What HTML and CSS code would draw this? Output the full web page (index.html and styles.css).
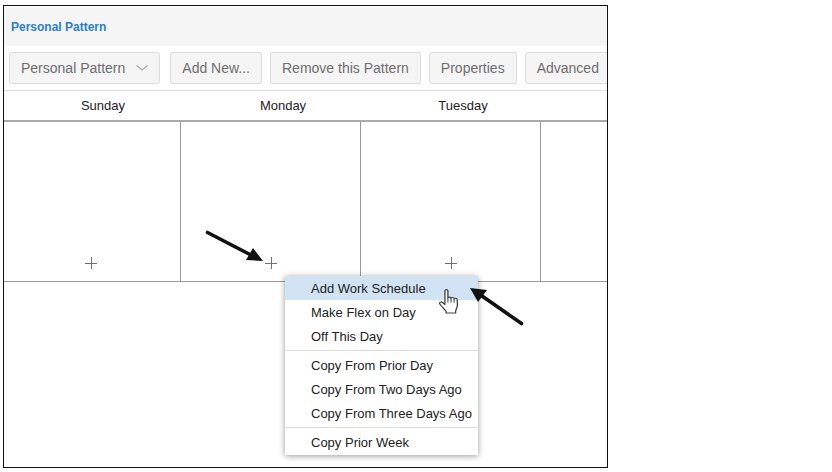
FILE: index.html
```html
<!DOCTYPE html>
<html lang="en">
<head>
  <meta charset="UTF-8">
  <meta name="viewport" content="width=device-width, initial-scale=1.0">
  <title>Personal Pattern</title>
  <link rel="stylesheet" href="styles.css">
</head>
<body>
  <div class="frame">
    <div class="title-bar">Personal Pattern</div>

    <div class="toolbar">
      <button class="btn btn-select" type="button">
        Personal Pattern
        <svg class="chevron" width="12" height="6" viewBox="0 0 12 6"><path d="M0.5 0.5 L6 5 L11.5 0.5" fill="none" stroke="#aaa" stroke-width="1.1"/></svg>
      </button>
      <button class="btn" type="button">Add New...</button>
      <button class="btn" type="button">Remove this Pattern</button>
      <button class="btn" type="button">Properties</button>
      <button class="btn" type="button">Advanced</button>
    </div>

    <div class="day-header">
      <div class="day-name">Sunday</div>
      <div class="day-name">Monday</div>
      <div class="day-name">Tuesday</div>
    </div>

    <div class="week">
      <div class="day"><span class="plus"></span></div>
      <div class="day"><span class="plus"></span></div>
      <div class="day"><span class="plus"></span></div>
      <div class="day"></div>
    </div>

    <ul class="menu">
      <li class="menu-item active">Add Work Schedule</li>
      <li class="menu-item">Make Flex on Day</li>
      <li class="menu-item">Off This Day</li>
      <li class="menu-sep"></li>
      <li class="menu-item">Copy From Prior Day</li>
      <li class="menu-item">Copy From Two Days Ago</li>
      <li class="menu-item">Copy From Three Days Ago</li>
      <li class="menu-sep"></li>
      <li class="menu-item">Copy Prior Week</li>
    </ul>

    <!-- callout arrows -->
    <svg class="arrow arrow-left" width="60" height="34" viewBox="0 0 60 34">
      <path d="M2.5 2.5 L46 25" stroke="#111" stroke-width="3.6" stroke-linecap="round" fill="none"/>
      <path d="M58 31 L41 30 L48 18 Z" fill="#111"/>
    </svg>
    <svg class="arrow arrow-right" width="56" height="40" viewBox="0 0 56 40">
      <path d="M52.500 36.500 L13 9" stroke="#111" stroke-width="3.6" stroke-linecap="round" fill="none"/>
      <path d="M1 1 L18 3 L9 15 Z" fill="#111"/>
    </svg>

    <!-- hand cursor -->
    <svg class="hand" width="19" height="25" viewBox="0.5 0.5 16 25" preserveAspectRatio="none">
      <path d="M5.500 2.500 C5.500 0.600 8 0.600 8 2.500 L8 9.500 C8.200 8.300 10.500 8.300 10.600 9.800 C10.900 8.700 13 8.800 13.200 10.300 C13.600 9.400 15.600 9.500 15.800 11 L16 16 C16 19 15 20.500 14.500 22.500 L14.500 24.500 L6.500 24.500 L6.500 22.800 C5 20.500 3 18.500 1.200 15.500 C0.400 13.800 2.300 12.800 3.500 14 L5.500 16 Z" fill="#fff" stroke="#444" stroke-width="1.1" stroke-linejoin="round"/>
      <path d="M8 9.500 L8 14 M10.600 9.800 L10.600 14 M13.200 10.300 L13.200 14" fill="none" stroke="#444" stroke-width="0.9"/>
    </svg>
  </div>
</body>
</html>
```

FILE: styles.css
```css
html, body {
  margin: 0;
  padding: 0;
  background: #fff;
}
body {
  width: 832px;
  height: 472px;
  overflow: hidden;
  font-family: 'Liberation Sans', Arial, sans-serif;
}
.frame {
  position: relative;
  box-sizing: border-box;
  width: 605px;
  height: 463px;
  margin: 5px 0 0 3px;
  padding-top: 1px;
  border: 1px solid #111;
  background: #fff;
  overflow: hidden;
}
.title-bar {
  height: 39px;
  line-height: 41px;
  padding-left: 7px;
  background: #f5f5f5;
  color: #2a7fc9;
  font-size: 12px;
  font-weight: bold;
}
.toolbar {
  display: flex;
  gap: 8px;
  height: 45px;
  padding: 6px 0 0 5px;
  box-sizing: border-box;
  border-bottom: 1px solid #ddd;
  white-space: nowrap;
}
.btn {
  display: flex;
  align-items: center;
  flex: none;
  height: 32px;
  padding: 0 11px;
  border: 1px solid #dcdcdc;
  border-radius: 3px;
  background: #f5f5f5;
  color: #6e6e6e;
  font-family: inherit;
  font-size: 14px;
}
.btn-select {
  margin-right: 2px;
}
.chevron {
  margin-left: 11px;
}
.day-header {
  display: grid;
  grid-template-columns: 180px 180px 180px;
  height: 31px;
  padding-left: 9px;
  box-sizing: border-box;
  border-bottom: 2px solid #aaa;
}
.day-name {
  text-align: center;
  line-height: 29px;
  color: #222;
  font-size: 13px;
}
.week {
  display: grid;
  grid-template-columns: 177px 180px 180px 1fr;
  height: 160px;
  border-bottom: 1px solid #999;
  box-sizing: border-box;
}
.day {
  display: flex;
  justify-content: center;
  align-items: flex-end;
  padding: 0 0 12px 1px;
  box-sizing: border-box;
  border-right: 1px solid #999;
}
.day:first-child {
  padding-left: 0;
  padding-right: 2px;
}
.day:last-child {
  border-right: none;
}
.plus {
  position: relative;
  width: 12px;
  height: 12px;
  background:
    linear-gradient(#707070, #707070) center / 12px 1px no-repeat,
    linear-gradient(#707070, #707070) center / 1px 12px no-repeat;
}
.menu {
  position: absolute;
  left: 281px;
  top: 270px;
  width: 193px;
  margin: 0;
  padding: 0 0 1px;
  list-style: none;
  background: #fff;
  box-shadow: 0 1px 6px rgba(0, 0, 0, 0.4);
  color: #222;
  font-size: 13px;
}
.menu-item {
  height: 24px;
  line-height: 26px;
  padding-left: 26px;
  white-space: nowrap;
}
.menu-item.active {
  background: #d2e4f3;
}
.menu-sep {
  height: 1px;
  margin: 2px 0;
  background: #ddd;
}
.arrow, .hand {
  position: absolute;
}
.arrow-left {
  left: 201px;
  top: 224px;
}
.arrow-right {
  left: 465px;
  top: 281px;
}
.hand {
  left: 435px;
  top: 283px;
}
```
